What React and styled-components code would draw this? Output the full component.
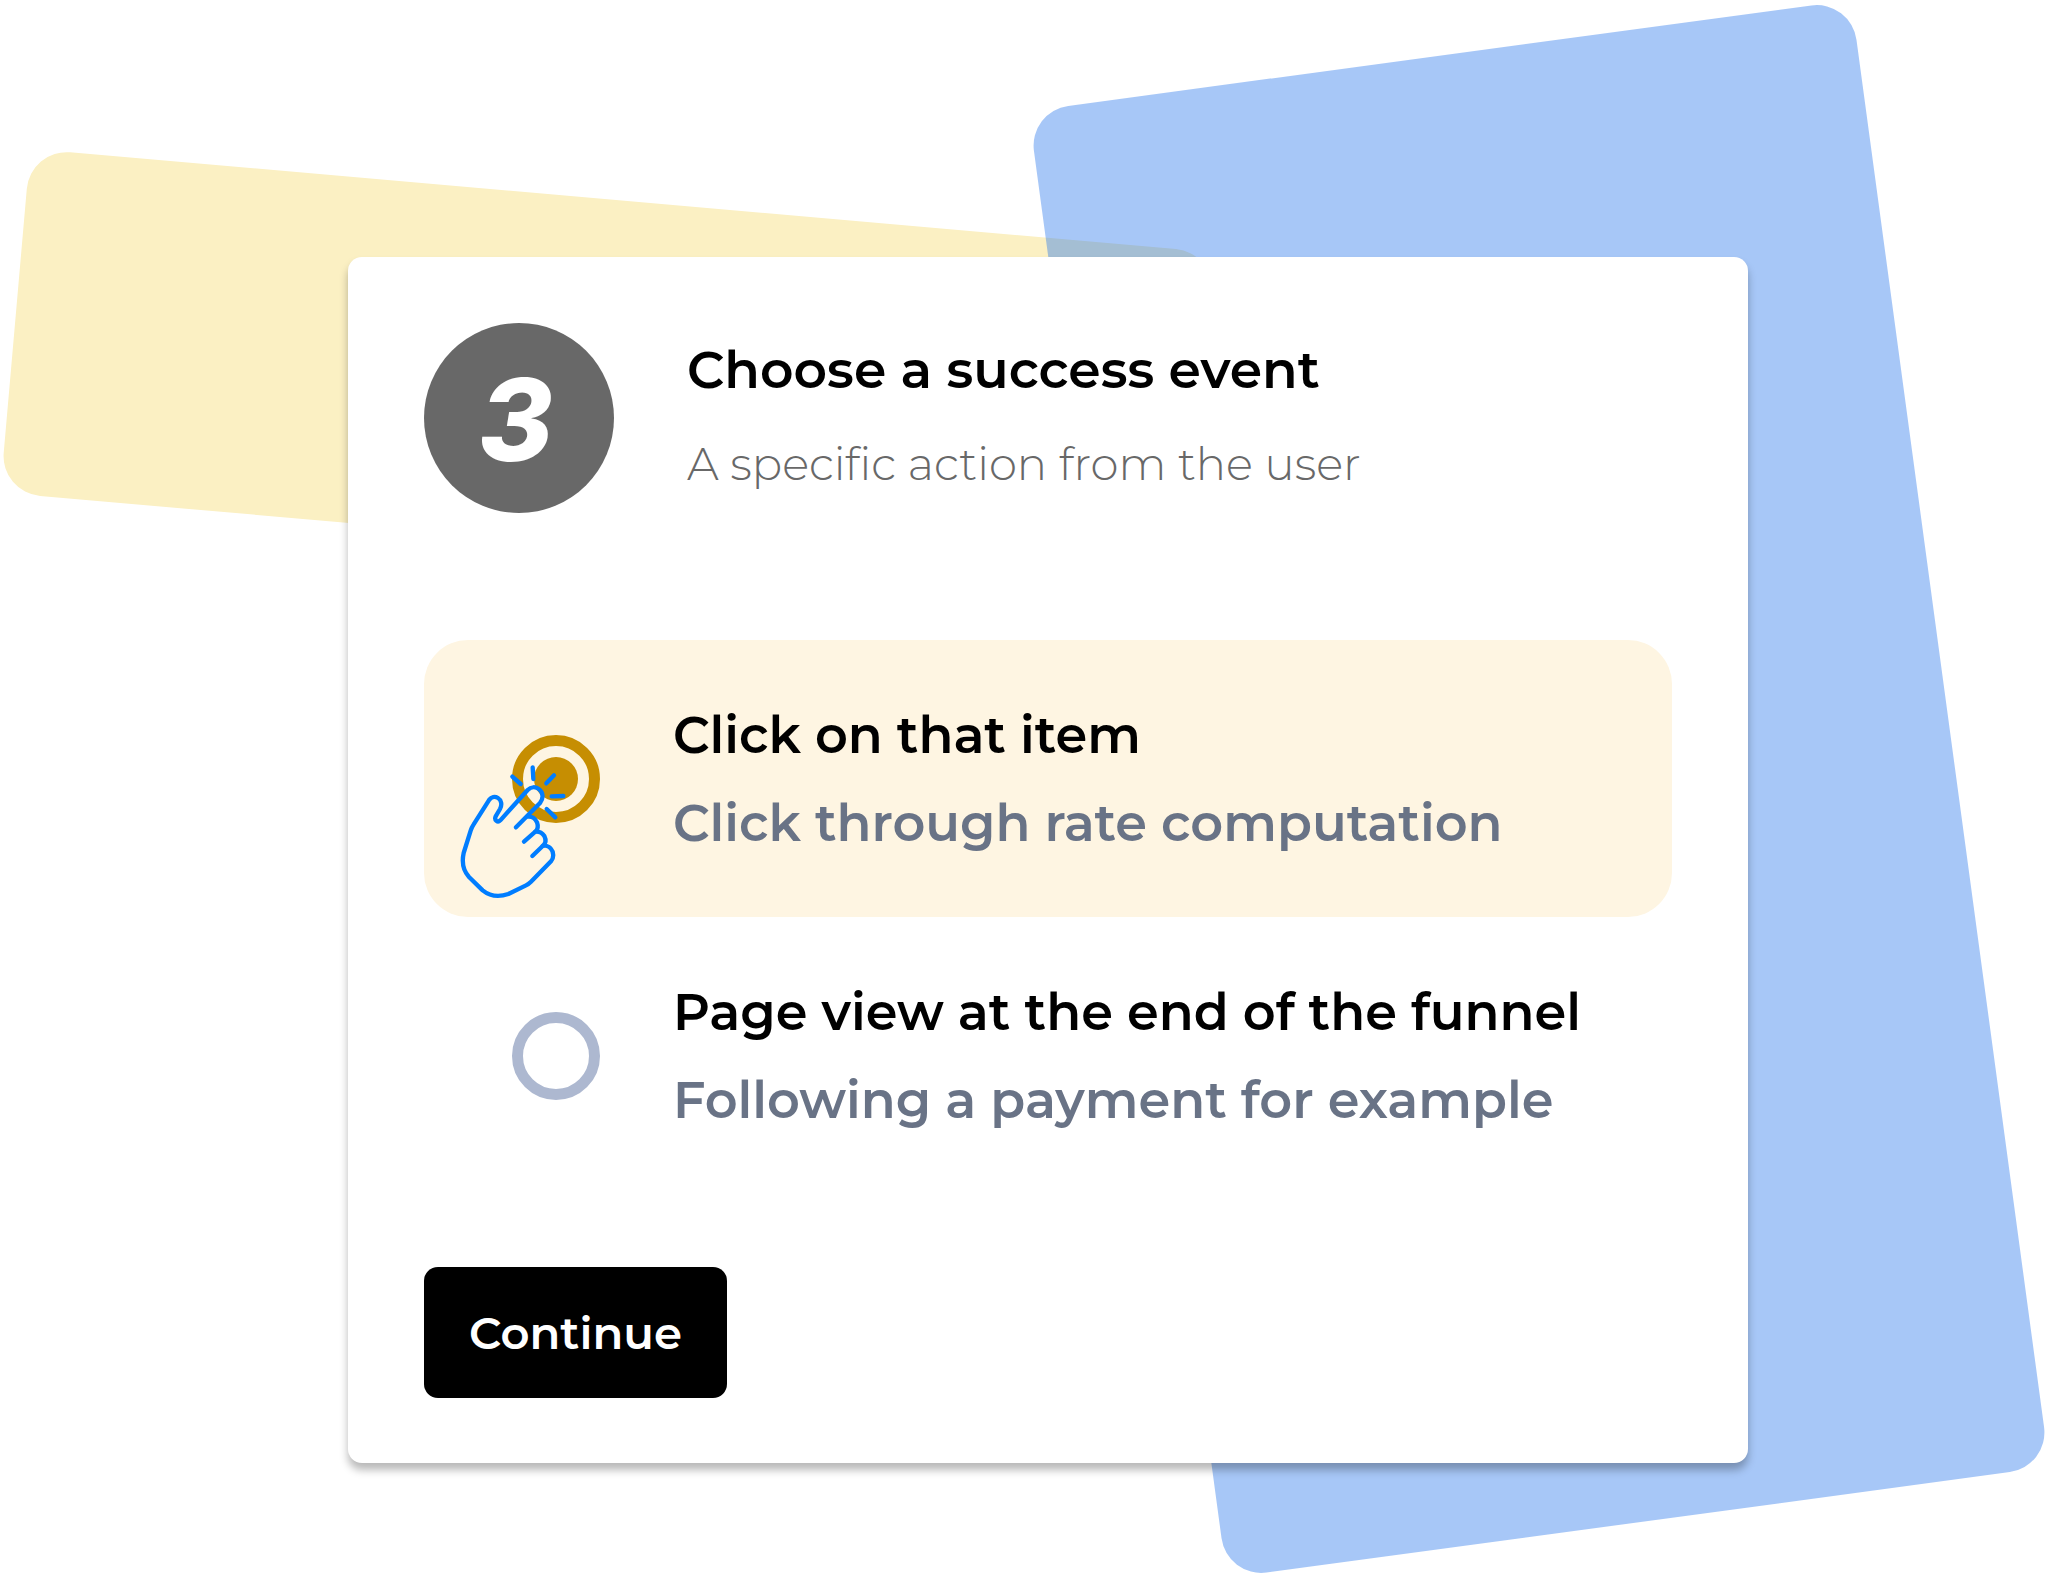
import React, { useState } from "react";
import styled, { createGlobalStyle } from "styled-components";

const GlobalStyle = createGlobalStyle`
  *, *::before, *::after { box-sizing: border-box; }
  body {
    margin: 0;
    background: #ffffff;
    color: #000000;
    font-family: Montserrat, Inter, "Liberation Sans", sans-serif;
  }
`;

const Page = styled.main`
  position: relative;
  overflow: hidden;
  min-height: 100vh;
  padding: 257px 301px 116px 348px;
`;

const Backdrop = styled.div`
  position: absolute;
  border-radius: 40px;
`;

const YellowBackdrop = styled(Backdrop)`
  top: 200px;
  left: 13px;
  width: 1190px;
  height: 345px;
  background: #fbf0c3;
  transform: rotate(5deg);
`;

const BlueBackdrop = styled(Backdrop)`
  top: 49px;
  right: 95px;
  width: 830px;
  height: 1480px;
  background: rgba(34, 114, 234, 0.4);
  transform: rotate(-7.7deg);
`;

const Card = styled.form`
  position: relative;
  padding: 66px 76px 65px;
  background: #ffffff;
  border-radius: 14px;
  box-shadow: 0 7px 8px rgba(0, 0, 0, 0.28);
`;

const Header = styled.header`
  display: flex;
  align-items: flex-start;
  gap: 73px;
`;

const StepBadge = styled.span`
  display: flex;
  flex: none;
  align-items: center;
  justify-content: center;
  width: 190px;
  height: 190px;
  padding: 4px 6px 0 0;
  border-radius: 50%;
  background: #686868;
  color: #ffffff;
  font-family: Inter, sans-serif;
  font-size: 114px;
  font-style: italic;
  font-weight: 800;
  line-height: 1;
`;

const Title = styled.h1`
  margin: 0;
  font-size: 52px;
  font-weight: 600;
  line-height: 94px;
`;

const Subtitle = styled.p`
  margin: 0;
  color: #686868;
  font-size: 45px;
  font-weight: 300;
  line-height: 94px;
`;

const Options = styled.fieldset`
  margin: 127px 0 73px;
  padding: 0;
  border: 0;
`;

const Option = styled.label`
  position: relative;
  display: flex;
  align-items: center;
  gap: 73px;
  min-height: 277px;
  padding: 50px 88px;
  border-radius: 44px;
  background: ${({ $selected }) => ($selected ? "#fef5e2" : "transparent")};
  cursor: pointer;
`;

const Radio = styled.input`
  appearance: none;
  flex: none;
  width: 88px;
  height: 88px;
  margin: 0;
  padding: 11px;
  border: 11px solid #adb8d0;
  border-radius: 50%;
  cursor: pointer;

  &:checked {
    border-color: #c68e02;
    background: #c68e02 content-box;
  }
`;

const OptionText = styled.span`
  display: flex;
  flex-direction: column;
  font-size: 51px;
  font-weight: 600;
  line-height: 88px;
`;

const OptionHint = styled.span`
  color: #697386;
`;

const Pointer = styled.svg`
  position: absolute;
  top: 120px;
  left: 31px;
  width: 120px;
  height: 140px;
  pointer-events: none;
`;

const ContinueButton = styled.button`
  display: block;
  min-width: 303px;
  height: 131px;
  padding: 0 40px;
  border: 0;
  border-radius: 14px;
  background: #000000;
  color: #ffffff;
  font-family: inherit;
  font-size: 45px;
  font-weight: 600;
  cursor: pointer;
`;

const OPTIONS = [
  { id: "click", label: "Click on that item", hint: "Click through rate computation" },
  { id: "view", label: "Page view at the end of the funnel", hint: "Following a payment for example" },
];

function PointingHand() {
  return (
    <Pointer
      viewBox="45 180 360 420"
      fill="none"
      stroke="#007dff"
      strokeWidth="13"
      strokeLinecap="round"
      strokeLinejoin="round"
      aria-hidden="true"
    >
      <path d="M228 382 L300 309 C311 296 310 278 298 268 C287 259 273 260 263 270 L181 361 C173 369 162 361 167 349 L180 327 C187 314 184 300 174 294 C164 288 154 291 148 299 L101 373 Q95 382 92 392 L71 459 C66 482 67 509 87 531 L128 571 C149 588 177 592 205 582 L258 556 Q266 552 273 545 L333 484 C342 474 342 456 332 445 C326 438 315 436 308 438" />
      <path d="M264 350 C276 349 286 356 291 367 C295 378 293 389 286 395 L252 425" />
      <path d="M286 395 C298 394 307 399 313 408 C319 420 317 431 308 438 L277 468" />
      <path d="M217 230 L242 252 M278 202 L280 237 M342 226 L319 250 M335 289 L370 288 M320 327 L346 352" />
    </Pointer>
  );
}

export default function App() {
  const [selected, setSelected] = useState("click");

  return (
    <>
      <GlobalStyle />
      <Page>
        <YellowBackdrop />
        <BlueBackdrop />
        <Card onSubmit={(event) => event.preventDefault()}>
          <Header>
            <StepBadge>3</StepBadge>
            <div>
              <Title id="step-title">Choose a success event</Title>
              <Subtitle>A specific action from the user</Subtitle>
            </div>
          </Header>
          <Options aria-labelledby="step-title">
            {OPTIONS.map(({ id, label, hint }) => (
              <Option key={id} htmlFor={id} $selected={selected === id}>
                <Radio
                  type="radio"
                  id={id}
                  name="success-event"
                  checked={selected === id}
                  onChange={() => setSelected(id)}
                />
                <OptionText>
                  {label}
                  <OptionHint>{hint}</OptionHint>
                </OptionText>
                {selected === id && <PointingHand />}
              </Option>
            ))}
          </Options>
          <ContinueButton type="submit">Continue</ContinueButton>
        </Card>
      </Page>
    </>
  );
}
